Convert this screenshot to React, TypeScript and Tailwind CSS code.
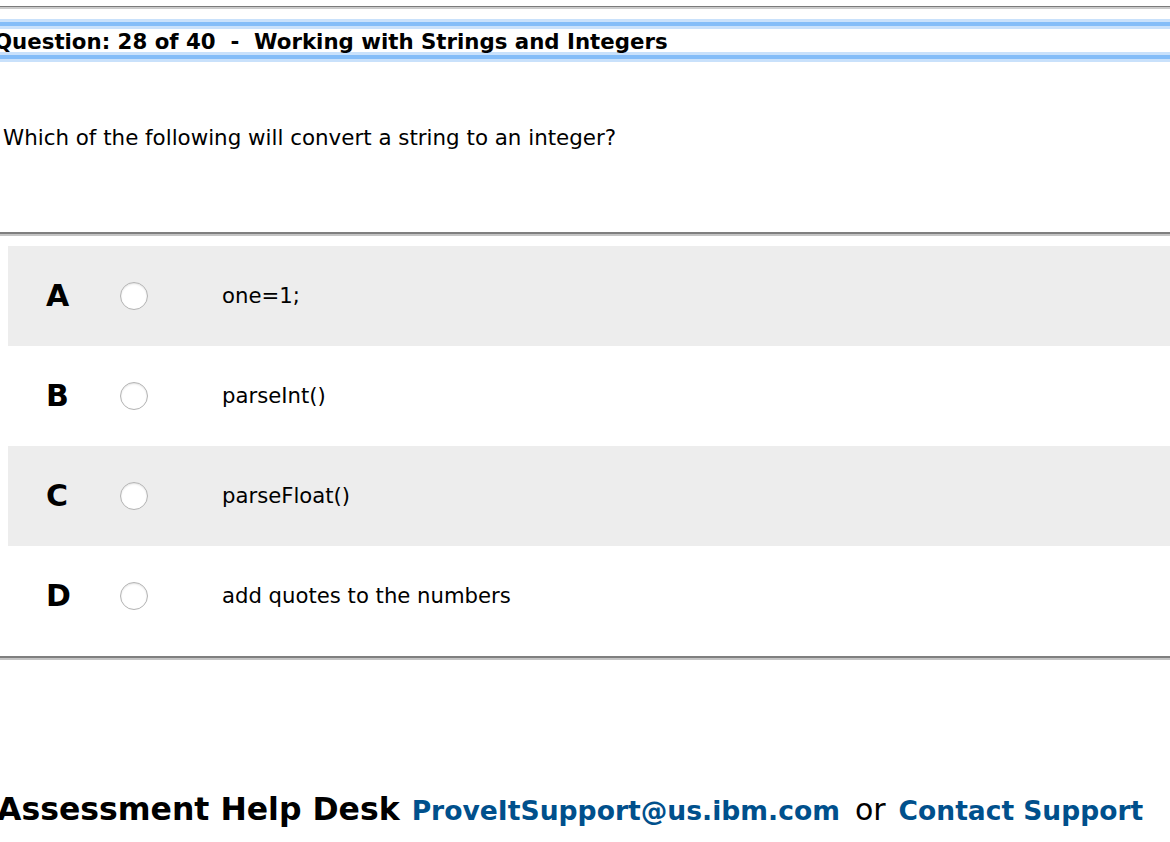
import React from "react";

const options = [
  { letter: "A", text: "one=1;", shaded: true },
  { letter: "B", text: "parseInt()", shaded: false },
  { letter: "C", text: "parseFloat()", shaded: true },
  { letter: "D", text: "add quotes to the numbers", shaded: false },
];

function BlueBand() {
  return (
    <div className="w-full">
      <div className="h-[3px] bg-[#c9e1fb]" />
      <div className="h-[4px] bg-[#84bdf8]" />
      <div className="h-[3px] bg-[#c9e1fb]" />
    </div>
  );
}

function Radio() {
  return (
    <div className="w-[28px] h-[28px] rounded-full bg-white border border-[#b3b3b3] shadow-[inset_0_1px_2px_rgba(0,0,0,0.12)]" />
  );
}

export default function App() {
  return (
    <div
      className="w-[1170px] h-[842px] bg-white text-black overflow-hidden"
      style={{ fontFamily: '"DejaVu Sans", Verdana, sans-serif' }}
    >
      <div className="h-[6px]" />
      <div className="h-[1px] bg-[#7b7b7b]" />
      <div className="h-[2px] bg-[#cbcbcb]" />
      <div className="h-[10px]" />
      <BlueBand />
      <div className="h-[23px] pt-[3px] flex items-center -ml-[6px]">
        <span className="text-[21.3px] font-bold leading-none whitespace-pre">
          Question: 28 of 40  -  Working with Strings and Integers
        </span>
      </div>
      <BlueBand />

      <div className="h-[63px]" />
      <div className="pl-[3px] text-[21.4px] leading-[26px] h-[26px] whitespace-nowrap">
        Which of the following will convert a string to an integer?
      </div>
      <div className="h-[81px]" />

      <div className="h-[2px] bg-[#7f7f7f]" />
      <div className="h-[2px] bg-[#c4c4c4]" />
      <div className="h-[10px]" />

      <div className="pl-[8px]">
        {options.map((o) => (
          <div
            key={o.letter}
            className={`h-[100px] flex items-center ${o.shaded ? "bg-[#ededed]" : "bg-white"}`}
          >
            <div className="w-[112px] pl-[38px] text-[30px] font-black leading-none">
              {o.letter}
            </div>
            <Radio />
            <div className="pl-[74px] text-[21.2px] whitespace-nowrap">{o.text}</div>
          </div>
        ))}
      </div>

      <div className="h-[10px]" />
      <div className="h-[2px] bg-[#7f7f7f]" />
      <div className="h-[2px] bg-[#c4c4c4]" />

      <div className="h-[126px]" />
      <div className="flex items-baseline whitespace-nowrap -ml-[3px]">
        <span className="text-[31.5px] font-bold">Assessment Help Desk</span>
        <span className="ml-[12px] text-[26.6px] font-bold text-[#00508c]">
          ProveItSupport@us.ibm.com
        </span>
        <span className="ml-[15px] text-[30px]">or</span>
        <span className="ml-[13px] text-[26.5px] font-bold text-[#00508c]">
          Contact Support
        </span>
      </div>
    </div>
  );
}
